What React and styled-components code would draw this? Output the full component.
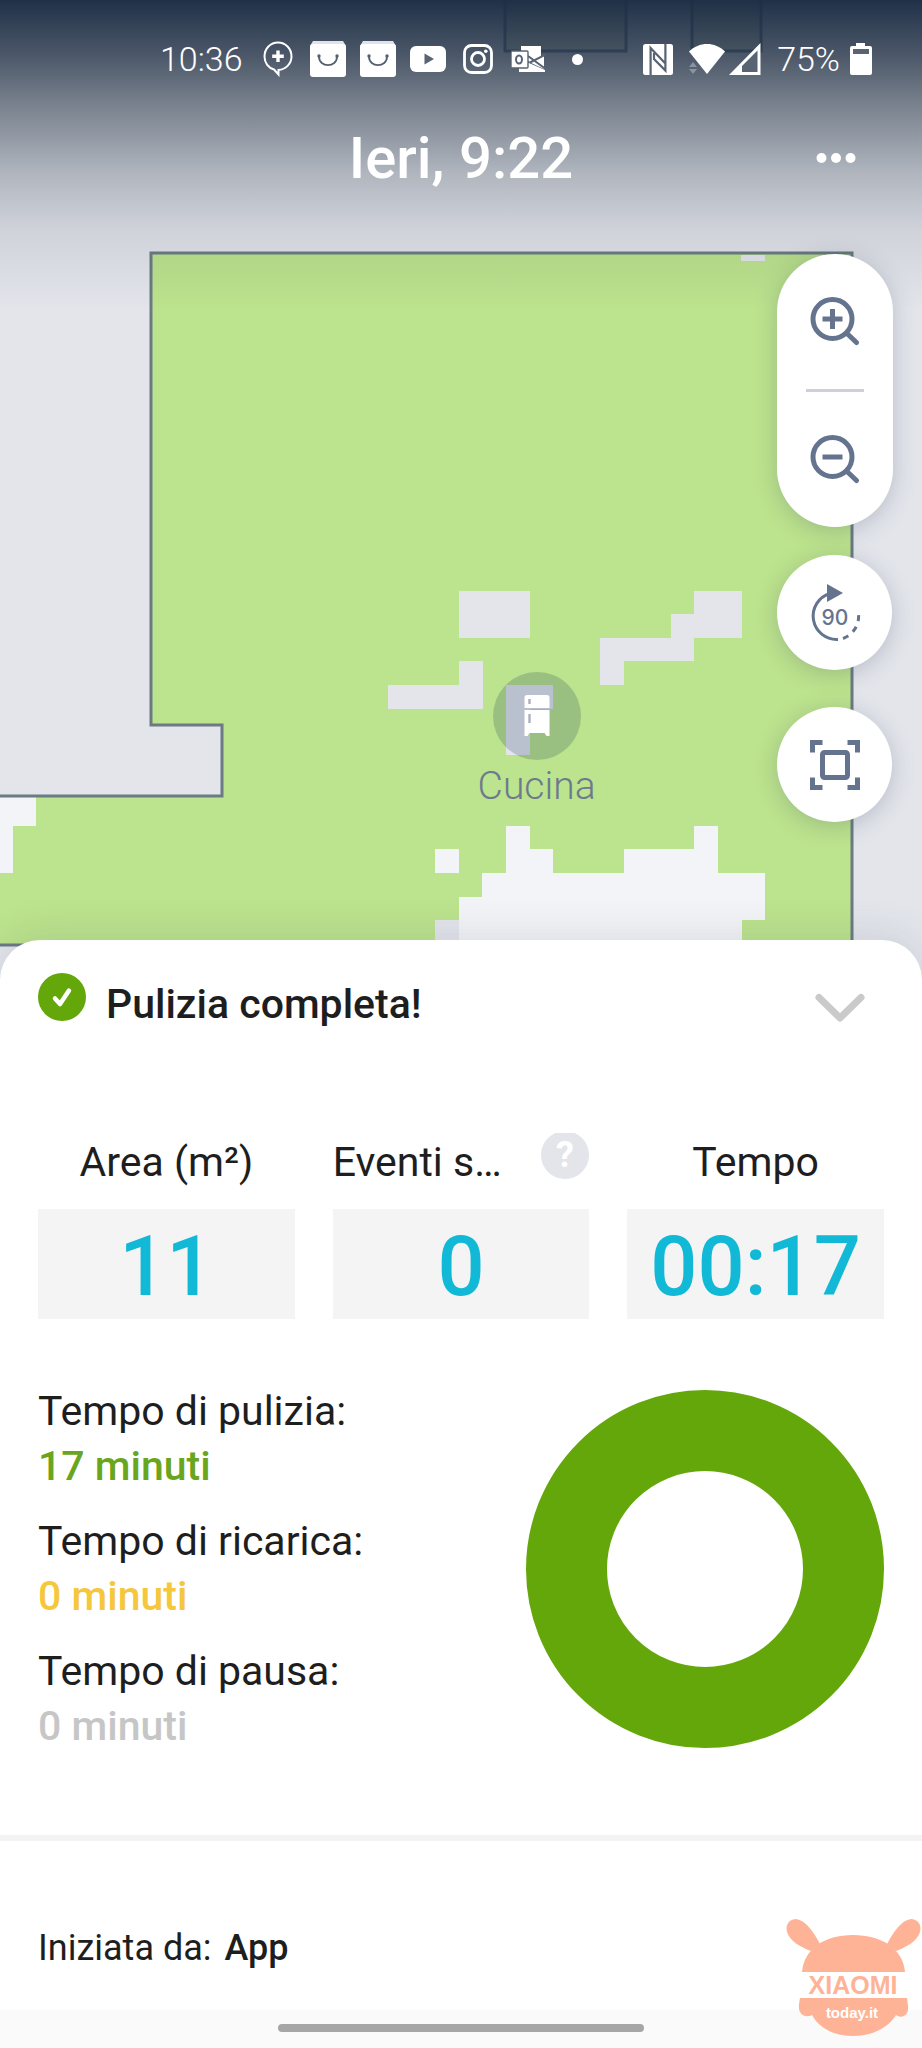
import React from 'react';
import styled, { createGlobalStyle } from 'styled-components';

const GlobalStyle = createGlobalStyle`
  * {
    box-sizing: border-box;
  }
  body {
    margin: 0;
    background: #fff;
    color: #1e1e1e;
    font-family: Roboto, 'Liberation Sans', sans-serif;
  }
  button {
    padding: 0;
    border: 0;
    background: none;
    color: inherit;
    font: inherit;
    cursor: pointer;
  }
  svg {
    display: block;
    flex: none;
  }
`;

const Page = styled.div`
  position: relative;
  display: flex;
  flex-direction: column;
  min-height: 100vh;
`;

/* map, room pin and controls share one grid cell, stacked in order */
const Stage = styled.section`
  display: grid;
  background: #e3e5eb;

  > * {
    grid-area: 1 / 1;
  }
`;

const FloorPlan = styled.svg`
  width: 100%;
  height: auto;
`;

const Overlay = styled.div`
  display: flex;
  flex-direction: column;
  min-width: 0;
`;

const Header = styled.header`
  height: 254px;
  color: #fff;
`;

const Shade = styled.div`
  height: 310px;
  background: linear-gradient(
    rgba(28, 45, 68, 0.98) 0,
    rgba(30, 45, 65, 0.75) 60px,
    rgba(30, 45, 62, 0.56) 100px,
    rgba(30, 45, 62, 0.44) 130px,
    rgba(30, 45, 62, 0.27) 170px,
    rgba(30, 45, 62, 0.18) 200px,
    rgba(30, 45, 62, 0.1) 230px,
    rgba(30, 45, 62, 0) 310px
  );
`;

const StatusBar = styled.div`
  display: flex;
  justify-content: space-between;
  height: 118px;
  padding: 0 50px 0 160px;
  font-size: 34px;
  font-weight: 300;
`;

const StatusGroup = styled.div`
  display: flex;
  align-items: center;
  gap: ${({ $gap }) => $gap}px;
`;

const Notifications = styled.div`
  display: grid;
  grid-auto-flow: column;
  grid-auto-columns: 50px;
  place-items: center;
`;

const TitleBar = styled.div`
  display: grid;
  grid-template-columns: 1fr auto 1fr;
  align-items: center;
  padding: 0 66px;
`;

const Title = styled.h1`
  grid-column: 2;
  margin: 0;
  font-size: 58px;
  font-weight: 500;
  line-height: 80px;
`;

const MoreButton = styled.button`
  justify-self: end;
`;

const Controls = styled.div`
  display: flex;
  flex-direction: column;
  align-self: flex-end;
  gap: 37px;
  padding-right: 29px;
  color: #64748f;
`;

const ControlGroup = styled.div`
  display: flex;
  flex-direction: column;
  gap: 28px;
`;

const Raised = styled.div`
  border-radius: 58px;
  background: #fff;
  box-shadow: 0 4px 22px rgba(60, 70, 100, 0.25);
`;

const ZoomPill = styled(Raised)`
  display: flex;
  flex-direction: column;
  align-items: center;
  width: 116px;
`;

const ZoomButton = styled.button`
  display: grid;
  place-items: center;
  width: 100%;
  height: 135px;
`;

const PillDivider = styled.div`
  width: 58px;
  height: 3px;
  background: #cdd0dc;
`;

const RoundButton = styled(Raised).attrs({ as: 'button' })`
  display: grid;
  place-items: center;
  width: 115px;
  height: 115px;
`;

const RoomPin = styled.div`
  position: absolute;
  top: 672px;
  left: 58.2%;
  display: flex;
  flex-direction: column;
  align-items: center;
  transform: translateX(-50%);
  color: #6d7a8e;
  font-size: 39px;
  font-weight: 300;
  line-height: 52px;
`;

const RoomBadge = styled.div`
  display: grid;
  place-items: center;
  width: 88px;
  height: 88px;
  border-radius: 50%;
  background: rgba(0, 32, 80, 0.18);
`;

const Sheet = styled.main`
  flex: 1;
  margin-top: -40px;
  border-radius: 40px 40px 0 0;
  background: #fff;
  box-shadow: 0 -4px 40px rgba(60, 70, 90, 0.14);
`;

const Summary = styled.div`
  display: flex;
  align-items: flex-start;
  gap: 20px;
  padding: 33px 56px 0 38px;
`;

const SummaryText = styled.h2`
  flex: 1;
  margin: 0;
  padding-top: 4px;
  font-size: 41px;
  font-weight: 500;
  line-height: 54px;
`;

const SheetToggle = styled.button`
  display: grid;
  place-items: center;
  height: 70px;
`;

const Stats = styled.dl`
  display: grid;
  grid-template-columns: repeat(3, 1fr);
  gap: 38px;
  margin: 0;
  padding: 90px 38px 0;
`;

const Stat = styled.div`
  min-width: 0;
`;

const StatLabel = styled.dt`
  display: flex;
  justify-content: ${({ $help }) => ($help ? 'space-between' : 'center')};
  align-items: flex-start;
  height: 76px;
  font-size: 41px;
  line-height: 58px;
  white-space: nowrap;
`;

const StatValue = styled.dd`
  margin: 0;
  padding-top: 6px;
  background: #f4f4f4;
  color: #12b9d6;
  font-size: 83px;
  font-weight: 500;
  line-height: 104px;
  text-align: center;
`;

const Breakdown = styled.section`
  display: flex;
  justify-content: space-between;
  align-items: center;
  padding: 65px 38px 81px;
`;

const Times = styled.dl`
  display: flex;
  flex-direction: column;
  gap: 20px;
  margin: 0;
  font-size: 41px;
  line-height: 55px;
`;

const TimeValue = styled.dd`
  margin: 0;
  color: ${({ $color }) => $color};
  font-weight: 500;
`;

const Source = styled.p`
  margin: 0;
  padding: 82px 38px 37px;
  border-top: 6px solid #f3f3f3;
  font-size: 36px;
  line-height: 50px;

  b {
    margin-left: 4px;
    font-weight: 500;
  }
`;

const NavBar = styled.footer`
  display: flex;
  justify-content: center;
  height: 38px;
  padding-top: 14px;
  background: #fafafa;
`;

const NavHandle = styled.div`
  width: 366px;
  height: 8px;
  border-radius: 4px;
  background: #a6a6a6;
`;

const Watermark = styled.svg`
  position: absolute;
  right: 1px;
  bottom: 11px;
`;

const BubbleIcon = () => (
  <svg width="30" height="36" viewBox="0 0 30 36" fill="none" stroke="#fff" strokeWidth="2">
    <path d="M15 1.5C7.5 1.5 1.500 7.500 1.500 15.500C1.500 22 5.500 27 11 28.500L15.500 33.500V29C22.500 28.500 28.500 23 28.500 15.500C28.500 7.500 22.500 1.500 15 1.500Z" />
    <path d="M15 9.500v11.500M9.200 15.200h11.600" strokeWidth="3.400" />
  </svg>
);

const BagIcon = () => (
  <svg width="36" height="36" viewBox="0 0 36 36">
    <path d="M3 0h30l3 5H0z" fill="#dfe4ec" />
    <rect y="3" width="36" height="33" rx="3" fill="#fff" />
    <path d="M9 15.500c0 11.500 18 11.500 18 0" fill="none" stroke="#55606f" strokeWidth="1.800" />
    <circle cx="9" cy="15" r="1.700" fill="#55606f" />
    <circle cx="27" cy="15" r="1.700" fill="#55606f" />
  </svg>
);

const VideoIcon = () => (
  <svg width="36" height="26" viewBox="0 0 36 26">
    <rect width="36" height="26" rx="6" fill="#fff" />
    <path d="M14.500 7.500v11l9.500-5.500z" fill="#586373" />
  </svg>
);

const CameraIcon = () => (
  <svg width="30" height="30" viewBox="0 0 30 30" fill="none" stroke="#fff" strokeWidth="2.800">
    <rect x="1.500" y="1.500" width="27" height="27" rx="7" />
    <circle cx="15" cy="15" r="6.500" />
    <circle cx="22.800" cy="7.200" r="1.800" fill="#fff" stroke="none" />
  </svg>
);

const MailIcon = () => (
  <svg width="34" height="28" viewBox="0 0 34 28">
    <path d="M10 1h20v12l-8 4-12-2z" fill="#fff" />
    <path d="M8 22l10-4 16 7v2H8z" fill="#fff" />
    <path d="M18 17l15-6v13z" fill="#fff" />
    <path d="M17 11l17 12.500M19 17.500L34 10" stroke="#586373" strokeWidth="2" />
    <rect x="0" y="6" width="17" height="17" rx="1" fill="#fff" stroke="#586373" strokeWidth="1.400" />
    <ellipse cx="8" cy="14.500" rx="3" ry="4" fill="none" stroke="#586373" strokeWidth="2" />
  </svg>
);

const DotIcon = () => (
  <svg width="11" height="11" viewBox="0 0 11 11">
    <circle cx="5.500" cy="5.500" r="5.500" fill="#fff" />
  </svg>
);

const NfcIcon = () => (
  <svg width="30" height="31" viewBox="0 0 30 31">
    <rect width="30" height="31" rx="2.500" fill="#fff" />
    <path d="M7.600 31V4l14.800 15.500M22.400 0v26.500L11 15V9" fill="none" stroke="#586373" strokeWidth="2.200" />
  </svg>
);

const WifiIcon = () => (
  <svg width="36" height="30" viewBox="0 0 36 30">
    <path d="M0 7.500C10-2.500 26-2.500 36 7.500L18 30z" fill="#fff" />
    <path d="M0 23l4-5 4 5zM0 25h8l-4 5z" fill="#8b94a1" />
  </svg>
);

const SignalIcon = () => (
  <svg width="32" height="32" viewBox="0 0 32 32">
    <path d="M31.500 0v32H0z" fill="#fff" />
    <path d="M28.500 7.500V29H13v-6z" fill="#586373" />
  </svg>
);

const BatteryIcon = () => (
  <svg width="22" height="32" viewBox="0 0 22 32">
    <path d="M6 0h9v3h5q2 0 2 2v25q0 2-2 2H2q-2 0-2-2V5q0-2 2-2h4z" fill="#fff" />
    <path d="M3 6h16v5H3z" fill="#586373" />
  </svg>
);

const MoreIcon = () => (
  <svg width="40" height="12" viewBox="0 0 40 12" fill="#fff">
    <circle cx="5.500" cy="6" r="5" />
    <circle cx="20" cy="6" r="5" />
    <circle cx="34.500" cy="6" r="5" />
  </svg>
);

const ZoomIcon = ({ plus }) => (
  <svg width="50" height="50" viewBox="0 0 50 50" fill="none" stroke="currentColor" strokeWidth="5">
    <circle cx="22.500" cy="22" r="19.500" />
    <path d="M36.500 36l10 9.500" strokeLinecap="round" />
    <path d="M12.500 22h20" />
    {plus && <path d="M22.500 12v20" />}
  </svg>
);

const RotateIcon = () => (
  <svg width="52" height="58" viewBox="0 0 52 58" fill="none" stroke="currentColor" strokeWidth="3">
    <path d="M21 9.500A23.500 23.500 0 0 0 29 55.500" />
    <path d="M34 54.500A23.500 23.500 0 0 0 49.500 30" strokeDasharray="6 6" />
    <path d="M18 0l16 9-16 9z" fill="currentColor" stroke="none" />
    <text
      x="26"
      y="41"
      fill="currentColor"
      stroke="none"
      fontFamily="Inter"
      fontSize="21"
      fontWeight="500"
      textAnchor="middle"
    >
      90
    </text>
  </svg>
);

const FitIcon = () => (
  <svg width="50" height="50" viewBox="0 0 50 50" fill="none" stroke="currentColor" strokeWidth="5">
    <path d="M2.500 12.500V2.500h10M37.500 2.500h10v10M47.500 37.500v10h-10M12.500 47.500h-10v-10" />
    <rect x="12.500" y="12.500" width="25" height="25" rx="2" />
  </svg>
);

const FridgeIcon = () => (
  <svg width="26" height="42" viewBox="0 0 26 42">
    <path d="M3 0h20q2.500 0 2.500 2.500V13H.500V2.500Q.500 0 3 0zM.500 15h25v26h-3l-2-3h-15l-2 3h-3z" fill="#fff" />
    <path d="M5.500 4v5M5.500 19v9" stroke="#a9b0bd" strokeWidth="2.400" />
  </svg>
);

const CheckIcon = () => (
  <svg width="48" height="48" viewBox="0 0 48 48">
    <circle cx="24" cy="24" r="24" fill="#63a70a" />
    <path
      d="M17 25.500l5 5.500 9-13.500"
      fill="none"
      stroke="#fff"
      strokeWidth="4.500"
      strokeLinecap="round"
      strokeLinejoin="round"
    />
  </svg>
);

const ChevronIcon = () => (
  <svg width="52" height="30" viewBox="0 0 52 30" fill="none" stroke="#cacaca" strokeWidth="7">
    <path d="M5 4.500l21 20.500L47 4.500" strokeLinecap="round" strokeLinejoin="round" />
  </svg>
);

const HelpIcon = () => (
  <svg width="48" height="46" viewBox="0 0 48 46">
    <circle cx="24" cy="22" r="24" fill="#e3e5eb" />
    <text x="24" y="34" fill="#fff" fontFamily="Roboto" fontSize="36" fontWeight="700" textAnchor="middle">
      ?
    </text>
  </svg>
);

const WALL = 'M-4 796H222V725H151V253H852V1000M-4 945H80';

const Map = () => (
  <FloorPlan viewBox="0 0 922 980" aria-hidden="true">
    <rect width="922" height="980" fill="#e3e5eb" />
    <path d="M0 796H222V725H151V253H852V980H80V945H0z" fill="#bce38d" />
    <g fill="#e3e5eb">
      <path d="M741 255h24v6h-24z" />
      <path d="M459 591h71v47h-71z" />
      <path d="M694 591h48v47h-48v23h-70v24h-24v-47h71v-24h23z" />
      <path d="M459 661h24v48h-95v-24h71z" />
      <path d="M506 685h47v24h-23v46h-24z" />
      <path d="M435 920h24v60h-24z" />
    </g>
    <g fill="#f3f4f7">
      <path d="M0 796h36v30H13v47H0z" />
      <path d="M435 849h24v24h-24z" />
      <path d="M506 826h24v23h23v24h71v-24h70v-23h24v47h47v47h-23v60H459v-83h23v-24h24z" />
    </g>
    <path d={WALL} fill="none" stroke="#6b7a83" strokeWidth="3" />
    <path d="M505 -4V51H626V-4M692 -4V51H761V-4" fill="#d5dccb" stroke="#6b7a93" strokeWidth="3" />
  </FloorPlan>
);

const TIMES = [
  { label: 'Tempo di pulizia:', value: '17 minuti', color: '#6aa51e' },
  { label: 'Tempo di ricarica:', value: '0 minuti', color: '#f5c73d' },
  { label: 'Tempo di pausa:', value: '0 minuti', color: '#c6c6c6' },
];

const Donut = () => (
  <svg width="358" height="358" viewBox="0 0 358 358" role="img" aria-label="17 minuti">
    <circle cx="179" cy="179" r="138.500" fill="none" stroke="#63a70a" strokeWidth="81" />
  </svg>
);

const Mascot = () => (
  <Watermark width="135" height="118" viewBox="0 0 135 118" fill="#ffb396">
    <path d="M16 53C18 30 38 16 67 16s50 14 52 37z" />
    <path d="M25 32C14 28 4 22 1 13C-1 5 4 0 10 0C20 1 28 14 34 25z" />
    <path d="M110 32c11-4 21-10 24-19c2-8-3-13-9-13c-10 1-18 14-24 25z" />
    <path d="M14 79h107c1 7 2 11 0 15c-3 5-8 4-11 2c-8 13-24 21-43 21s-34-8-41-21c-4 2-9 2-12-3c-2-4-1-8 0-14z" />
    <text x="67" y="75" fontFamily="Liberation Sans" fontSize="25" fontWeight="700" textAnchor="middle">
      XIAOMI
    </text>
    <text x="66" y="99" fill="#fff" fontFamily="Liberation Sans" fontSize="15" fontWeight="700" textAnchor="middle">
      today.it
    </text>
  </Watermark>
);

const App = () => (
  <Page>
    <GlobalStyle />
    <Stage>
      <Map />
      <Shade />
      <RoomPin>
        <RoomBadge><FridgeIcon /></RoomBadge>
        Cucina
      </RoomPin>
      <Overlay>
        <Header>
          <StatusBar>
            <StatusGroup $gap={10}>
              <span>10:36</span>
              <Notifications>
                <BubbleIcon />
                <BagIcon />
                <BagIcon />
                <VideoIcon />
                <CameraIcon />
                <MailIcon />
                <DotIcon />
              </Notifications>
            </StatusGroup>
            <StatusGroup $gap={16}>
              <NfcIcon />
              <StatusGroup $gap={4}>
                <WifiIcon />
                <SignalIcon />
              </StatusGroup>
              <StatusGroup $gap={10}>
                <span>75%</span>
                <BatteryIcon />
              </StatusGroup>
            </StatusGroup>
          </StatusBar>
          <TitleBar>
            <Title>Ieri, 9:22</Title>
            <MoreButton type="button" aria-label="Menu"><MoreIcon /></MoreButton>
          </TitleBar>
        </Header>
        <Controls>
          <ControlGroup>
            <ZoomPill>
              <ZoomButton type="button" aria-label="Zoom +"><ZoomIcon plus /></ZoomButton>
              <PillDivider />
              <ZoomButton type="button" aria-label="Zoom -"><ZoomIcon /></ZoomButton>
            </ZoomPill>
            <RoundButton type="button"><RotateIcon /></RoundButton>
          </ControlGroup>
          <RoundButton type="button" aria-label="Centra"><FitIcon /></RoundButton>
        </Controls>
      </Overlay>
    </Stage>
    <Sheet>
      <Summary>
        <CheckIcon />
        <SummaryText>Pulizia completa!</SummaryText>
        <SheetToggle type="button" aria-label="Chiudi"><ChevronIcon /></SheetToggle>
      </Summary>
      <Stats>
        <Stat>
          <StatLabel>Area (m²)</StatLabel>
          <StatValue>11</StatValue>
        </Stat>
        <Stat>
          <StatLabel $help>
            Eventi s…
            <button type="button" aria-label="Aiuto"><HelpIcon /></button>
          </StatLabel>
          <StatValue>0</StatValue>
        </Stat>
        <Stat>
          <StatLabel>Tempo</StatLabel>
          <StatValue>00:17</StatValue>
        </Stat>
      </Stats>
      <Breakdown>
        <Times>
          {TIMES.map(({ label, value, color }) => (
            <div key={label}>
              <dt>{label}</dt>
              <TimeValue $color={color}>{value}</TimeValue>
            </div>
          ))}
        </Times>
        <Donut />
      </Breakdown>
      <Source>
        Iniziata da: <b>App</b>
      </Source>
    </Sheet>
    <NavBar><NavHandle /></NavBar>
    <Mascot />
  </Page>
);

export default App;
